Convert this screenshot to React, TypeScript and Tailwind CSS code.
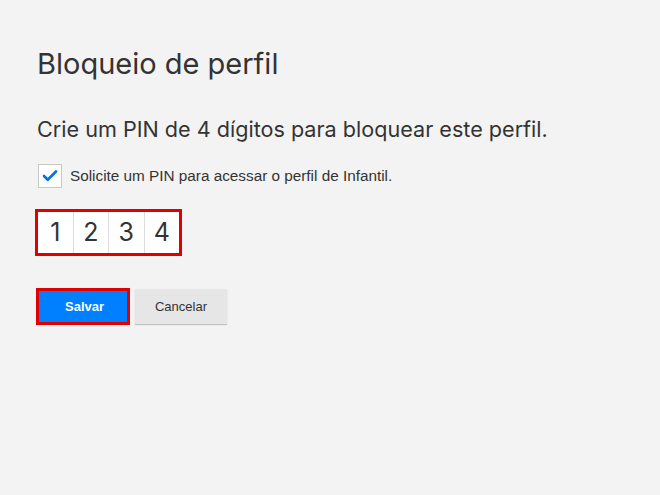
import { Check } from "lucide-react";

const digits = ["1", "2", "3", "4"];

export default function App() {
  return (
    <div className="h-[495px] w-[660px] overflow-hidden bg-[#f3f3f3] font-['Inter',sans-serif] text-[#333]">
      <div className="pl-[37px] pt-[46px]">
        <h1 className="text-[29px] leading-[36px] font-normal">Bloqueio de perfil</h1>

        <p className="mt-[33px] text-[21.6px] leading-[28px]">
          Crie um PIN de 4 dígitos para bloquear este perfil.
        </p>

        <label className="mt-[21px] flex items-center gap-[8px] font-['Liberation_Sans',sans-serif] text-[15.3px]">
          <span className="ml-[1px] flex size-[24px] items-center justify-center border border-[#c8c8c8] bg-white">
            <Check className="size-[18px] text-[#0073e6]" strokeWidth={3.5} />
          </span>
          <span>Solicite um PIN para acessar o perfil de Infantil.</span>
        </label>

        <div className="mt-[21px] ml-[-2px] flex w-[147px] border-[3px] border-[#e00000] bg-white">
          {digits.map((d, i) => (
            <div
              key={d}
              className={`flex h-[41px] flex-1 items-center justify-center text-[25px] ${i > 0 ? "border-l border-[#dcdcdc]" : ""}`}
            >
              {d}
            </div>
          ))}
        </div>

        <div className="mt-[32px] ml-[-1px] flex items-center gap-[5px] font-['Liberation_Sans',sans-serif] text-[13px]">
          <button className="border-[3px] border-[#e00000] bg-[#0080ff] px-[26px] py-[8px] font-bold text-white">
            <span className="block h-[15px] w-[36px] leading-[15px]">Salvar</span>
          </button>
          <button className="h-[35px] w-[92px] bg-[#e6e6e6] text-[#333] shadow-[0_1px_1px_rgba(0,0,0,0.2)]">
            Cancelar
          </button>
        </div>
      </div>
    </div>
  );
}
